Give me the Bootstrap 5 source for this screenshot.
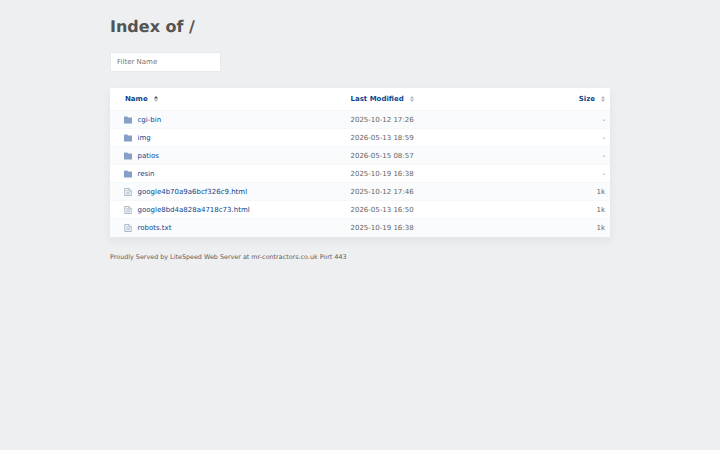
<!DOCTYPE html>
<html lang="en">

<head>
  <meta charset="UTF-8" />
  <meta name="viewport" content="width=device-width, initial-scale=1" />
  <title>Index of /</title>
  <link href="https://cdn.jsdelivr.net/npm/bootstrap@5.3.0/dist/css/bootstrap.min.css" rel="stylesheet" />
  <script src="https://cdn.jsdelivr.net/npm/bootstrap@5.3.0/dist/js/bootstrap.bundle.min.js"></script>
  <style>
    body {
      background-color: #edeff1;
      color: #545454;
      font-family: "DejaVu Sans", sans-serif;
      font-size: 7px;
      line-height: 10px;
      text-rendering: geometricPrecision;
    }

    .page {
      width: 500px;
      padding-top: 16px;
    }

    h1 {
      font-size: 16px;
      line-height: 22px;
      margin-bottom: 14px;
    }

    .filter-box {
      width: 111px;
      height: 20px;
      min-height: 0;
      padding: 0 6px;
      font-size: 7px;
      border: 1px solid #e6eaed;
      border-radius: 1px;
    }

    .filter-box::placeholder {
      color: #757575;
    }

    .listing {
      margin-top: 16px;
      background-color: #fff;
      border-radius: 1px;
      box-shadow: 0 4px 10px rgba(40, 50, 60, 0.06);
    }

    .listing table {
      table-layout: fixed;
      line-height: 10px;
      --bs-table-bg: transparent;
      --bs-table-color: #656565;
      --bs-table-striped-color: #656565;
      --bs-table-striped-bg: #f9fbfd;
    }

    .listing th,
    .listing td {
      padding: 4px 5px 2px;
      height: 18px;
      border: 0;
      border-top: 1px solid #f5f7f9;
      vertical-align: top;
    }

    .listing th {
      height: 22px;
      padding-top: 6px;
      border-top: 0;
    }

    .listing tbody tr:last-child td {
      height: 19px;
    }

    .listing th:first-child {
      padding-left: 15px;
    }

    .listing td:first-child {
      padding-left: 14px;
    }

    .listing a {
      color: #0d468d;
      text-decoration: none;
    }

    .listing td svg {
      width: 8px;
      height: 8px;
      margin-right: 5.5px;
    }

    .sorter {
      width: 4px;
      height: 6px;
      margin-left: 6px;
    }

    th:first-child .sorter {
      margin-left: 6.5px;
    }

    .server-line {
      margin-top: 15px;
      font-size: 6.4px;
      color: #626262;
    }
  </style>
</head>

<body>
  <!-- shared icons -->
  <svg class="d-none">
    <symbol id="folder" viewBox="0 0 16 16">
      <path fill="#869fc7" d="M1.500 1h5l1.500 2h6.500q1.500 0 1.500 1.500v9.500q0 1-1 1H1q-1 0-1-1V2.500q0-1.500 1.500-1.500z" />
    </symbol>
    <symbol id="file" viewBox="0 0 16 16">
      <path fill="#f5f8fa" stroke="#93a7b8" stroke-width="1.500" d="M1.500 1h8.500l4.500 4.500V15h-13z" />
      <path fill="none" stroke="#93a7b8" stroke-width="1.300" d="M9.500 1v5h5M4.500 5h3M4.500 8.500h7M4.500 11.500h7" />
    </symbol>
    <symbol id="sort" viewBox="0 0 8 12">
      <path fill="#b0b3b7" d="M4 0l4 5H0zM4 12L0 7h8z" />
    </symbol>
    <symbol id="sort-asc" viewBox="0 0 8 12">
      <path fill="#4c4f53" d="M4 0l4 5H0z" />
      <path fill="#b0b3b7" d="M4 12L0 7h8z" />
    </symbol>
  </svg>

  <div class="page mx-auto">
    <h1 class="fw-bold">Index of /</h1>
    <input type="text" class="form-control filter-box" placeholder="Filter Name" />

    <div class="listing">
      <table class="table table-striped mb-0">
        <colgroup>
          <col style="width: 47.1%" />
          <col style="width: 32.9%" />
          <col style="width: 20%" />
        </colgroup>
        <thead>
          <tr>
            <th><a href="#">Name</a><svg class="sorter"><use href="#sort-asc" /></svg></th>
            <th><a href="#">Last Modified</a><svg class="sorter"><use href="#sort" /></svg></th>
            <th class="text-end"><a href="#">Size</a><svg class="sorter"><use href="#sort" /></svg></th>
          </tr>
        </thead>
        <tbody>
          <tr>
            <td><a href="#"><svg><use href="#folder" /></svg>cgi-bin</a></td>
            <td>2025-10-12 17:26</td>
            <td class="text-end">-</td>
          </tr>
          <tr>
            <td><a href="#"><svg><use href="#folder" /></svg>img</a></td>
            <td>2026-05-13 18:59</td>
            <td class="text-end">-</td>
          </tr>
          <tr>
            <td><a href="#"><svg><use href="#folder" /></svg>patios</a></td>
            <td>2026-05-15 08:57</td>
            <td class="text-end">-</td>
          </tr>
          <tr>
            <td><a href="#"><svg><use href="#folder" /></svg>resin</a></td>
            <td>2025-10-19 16:38</td>
            <td class="text-end">-</td>
          </tr>
          <tr>
            <td><a href="#"><svg><use href="#file" /></svg>google4b70a9a6bcf326c9.html</a></td>
            <td>2025-10-12 17:46</td>
            <td class="text-end">1k</td>
          </tr>
          <tr>
            <td><a href="#"><svg><use href="#file" /></svg>google8bd4a828a4718c73.html</a></td>
            <td>2026-05-13 16:50</td>
            <td class="text-end">1k</td>
          </tr>
          <tr>
            <td><a href="#"><svg><use href="#file" /></svg>robots.txt</a></td>
            <td>2025-10-19 16:38</td>
            <td class="text-end">1k</td>
          </tr>
        </tbody>
      </table>
    </div>

    <p class="server-line mb-0">Proudly Served by LiteSpeed Web Server at mr-contractors.co.uk Port 443</p>
  </div>
</body>

</html>
